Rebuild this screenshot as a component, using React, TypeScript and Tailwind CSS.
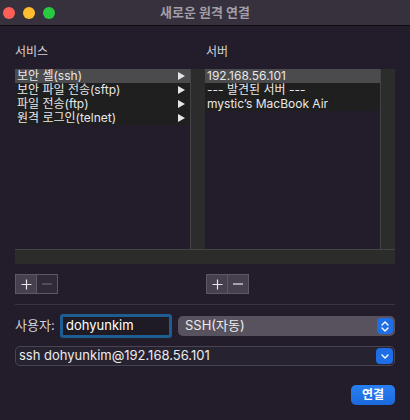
import React from "react";

const font = { fontFamily: 'Inter, "Noto Sans CJK KR", sans-serif' };

function Arrow() {
  return (
    <svg width="7" height="8" viewBox="0 0 7 8" className="shrink-0">
      <polygon points="0,0 7,4 0,8" fill="#e6e6e6" />
    </svg>
  );
}

function Row({ text, selected, arrow }: { text: string; selected?: boolean; arrow?: boolean }) {
  return (
    <div
      className={`h-[14px] flex items-center justify-between pl-[2px] pr-[5px] text-[12px] leading-[14px] text-[#e8e8e8] ${
        selected ? "bg-[#4b4b4d]" : "bg-[#1f1f1f]"
      }`}
    >
      <span className="whitespace-nowrap">{text}</span>
      {arrow && <Arrow />}
    </div>
  );
}

function PlusMinus({ minusEnabled }: { minusEnabled: boolean }) {
  return (
    <div className="flex h-[20px] w-[43px] border border-[#5e5866]">
      <div className="w-[21px] h-full bg-[#46404e] flex items-center justify-center border-r border-[#5e5866]">
        <svg width="11" height="11" viewBox="0 0 11 11">
          <path d="M5.5 0.5v10M0.5 5.5h10" stroke="#e8e6ea" strokeWidth="1.2" />
        </svg>
      </div>
      <div
        className={`flex-1 h-full flex items-center justify-center ${
          minusEnabled ? "bg-[#46404e]" : "bg-[#302a37]"
        }`}
      >
        <svg width="10" height="2" viewBox="0 0 10 2">
          <path d="M0 1h10" stroke={minusEnabled ? "#e8e6ea" : "#6a6470"} strokeWidth="1.2" />
        </svg>
      </div>
    </div>
  );
}

export default function App() {
  return (
    <div className="w-[410px] h-[420px] bg-[#231d2b] flex flex-col overflow-hidden" style={font}>
      {/* Title bar */}
      <div className="relative h-[26px] bg-[#37313e] border-b border-[#0e0c10] flex items-center shrink-0">
        <div className="flex items-center gap-[8px] pl-[3px]">
          <div className="w-[12px] h-[12px] rounded-full bg-[#fe5f57]" />
          <div className="w-[12px] h-[12px] rounded-full bg-[#febc2e]" />
          <div className="w-[12px] h-[12px] rounded-full bg-[#28c840]" />
        </div>
        <div className="absolute inset-0 flex items-center justify-center text-[13px] font-bold text-[#a29ea8]">
          새로운 원격 연결
        </div>
      </div>

      <div className="px-[15px] flex flex-col">
        {/* Labels */}
        <div className="flex mt-[19px] h-[14px] text-[12px] leading-[14px] text-[#d6d2da]">
          <div className="w-[191px]">서비스</div>
          <div>서버</div>
        </div>

        {/* Lists */}
        <div className="flex mt-[10px] h-[180px]">
          <div className="w-[176px] flex flex-col">
            <Row text="보안 셸(ssh)" selected arrow />
            <Row text="보안 파일 전송(sftp)" arrow />
            <Row text="파일 전송(ftp)" arrow />
            <Row text="원격 로그인(telnet)" arrow />
          </div>
          <div className="w-[15px] bg-[#2c2c2c] border-l border-[#444]" />
          <div className="w-[176px] flex flex-col">
            <Row text="192.168.56.101" selected />
            <Row text="--- 발견된 서버 ---" />
            <Row text="mystic’s MacBook Air" />
          </div>
          <div className="w-[15px] bg-[#2c2c2c] border-l border-[#444]" />
        </div>
        <div className="h-[15px] bg-[#2c2d2a] border-t border-[#444]" />

        {/* +/- buttons */}
        <div className="flex mt-[10px]">
          <div className="w-[191px]">
            <PlusMinus minusEnabled={false} />
          </div>
          <PlusMinus minusEnabled />
        </div>

        <div className="mt-[10px] h-px bg-[#3a3441]" />

        {/* User row */}
        <div className="mt-[9px] h-[24px] flex items-center">
          <span className="w-[45px] text-[13px] text-[#d6d2da]">사용자:</span>
          <div className="w-[112px] h-[24px] rounded-[3px] border-[3px] border-[#1d5d91] bg-[#1f1b24] flex items-center pl-[3px] text-[13px] text-white">
            dohyunkim
          </div>
          <div className="ml-[6px] flex-1 h-[20px] rounded-[5px] bg-[#58525e] flex items-center justify-between pl-[7px] pr-[2px] text-[13px] text-[#ececec]">
            <span>SSH(자동)</span>
            <div className="w-[16px] h-[16px] rounded-[4px] bg-[#1e6ee6] flex items-center justify-center">
              <svg width="8" height="11" viewBox="0 0 8 11">
                <path d="M1 4l3-3 3 3M1 7l3 3 3-3" stroke="white" strokeWidth="1.4" fill="none" strokeLinecap="round" strokeLinejoin="round" />
              </svg>
            </div>
          </div>
        </div>

        {/* Command combo */}
        <div className="mt-[8px] h-[20px] rounded-[5px] border border-[#4a4450] bg-[#272230] flex items-center justify-between pl-[3px] pr-[1px] text-[13px] text-[#ececec]">
          <span>ssh dohyunkim@192.168.56.101</span>
          <div className="w-[17px] h-[16px] rounded-[4px] bg-[#1e6ee6] flex items-center justify-center">
            <svg width="8" height="5" viewBox="0 0 8 5">
              <path d="M1 1l3 3 3-3" stroke="white" strokeWidth="1.4" fill="none" strokeLinecap="round" strokeLinejoin="round" />
            </svg>
          </div>
        </div>

        {/* Connect button */}
        <div className="mt-[19px] flex justify-end">
          <div className="w-[44px] h-[20px] rounded-[5px] bg-gradient-to-b from-[#2a7ff0] to-[#1a69dd] flex items-center justify-center text-[12px] font-bold text-white">
            연결
          </div>
        </div>
      </div>
    </div>
  );
}
